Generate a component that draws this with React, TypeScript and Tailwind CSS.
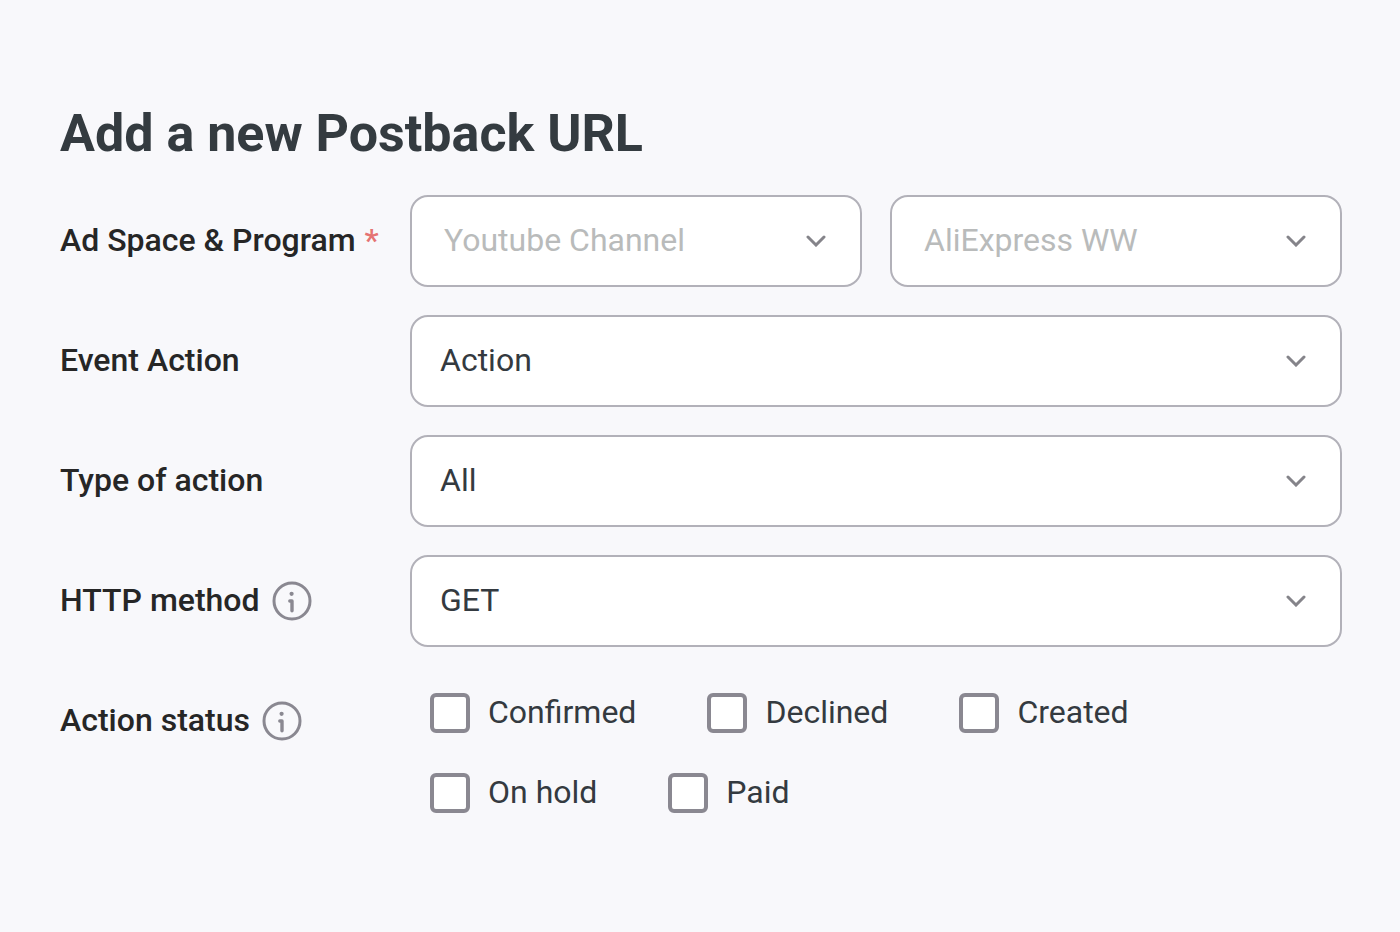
import { useId, useState } from "react";
import type { ReactNode } from "react";

function Chevron() {
  return (
    <svg
      className="pointer-events-none absolute top-1/2 right-[34px] h-3 w-6 -translate-y-1/2"
      viewBox="0 0 24 12"
      fill="none"
      stroke="#85848a"
      strokeWidth="3"
      strokeLinecap="round"
      strokeLinejoin="miter"
      aria-hidden="true"
    >
      <path d="M4 2l8 8 8-8" />
    </svg>
  );
}

function InfoIcon() {
  return (
    <svg
      className="size-10 shrink-0"
      viewBox="0 0 40 40"
      fill="none"
      stroke="#8a8891"
      strokeWidth="3"
      strokeLinecap="round"
      strokeLinejoin="round"
      aria-hidden="true"
    >
      <circle cx="20" cy="20" r="18" />
      <path d="M17.8 20h2.2V29.8" strokeWidth="3.4" />
      <circle cx="19.6" cy="12.8" r="2.1" fill="#8a8891" stroke="none" />
    </svg>
  );
}

type SelectProps = {
  id: string;
  options: string[];
  muted?: boolean;
  label?: string;
};

function Select({ id, options, muted, label }: SelectProps) {
  return (
    <div className="relative min-w-0 flex-1">
      <select
        id={id}
        aria-label={label}
        className={
          muted
            ? "block h-23 w-full appearance-none rounded-[18px] border-2 border-[#b2b1b9] bg-white pr-16 pb-0.5 pl-8 text-[32px] text-[#b9bbbb]"
            : "block h-23 w-full appearance-none rounded-[18px] border-2 border-[#b2b1b9] bg-white pr-16 pb-0.5 pl-7 text-[32px] text-[#343a40]"
        }
      >
        {options.map((option) => (
          <option key={option}>{option}</option>
        ))}
      </select>
      <Chevron />
    </div>
  );
}

function Row({ label, htmlFor, extra, children }: { label: string; htmlFor: string; extra?: ReactNode; children: ReactNode }) {
  return (
    <div className="flex items-center">
      <div className="flex w-[350px] shrink-0 items-center">
        <label htmlFor={htmlFor} className="pb-0.5 text-[32px] leading-10 font-medium text-[#262626]">
          {label}
        </label>
        {extra}
      </div>
      <div className="flex min-w-0 flex-1 gap-7">{children}</div>
    </div>
  );
}

function Status({ label }: { label: string }) {
  const id = useId();
  const [checked, setChecked] = useState(false);
  return (
    <div className="flex items-center gap-[18px]">
      <input
        id={id}
        type="checkbox"
        checked={checked}
        onChange={(event) => setChecked(event.target.checked)}
        className="size-10 appearance-none rounded-[6px] border-4 border-[#8a8891] bg-white checked:bg-[#8a8891]"
      />
      <label htmlFor={id} className="pb-0.5 text-[32px] leading-[38px] text-[#343a40]">
        {label}
      </label>
    </div>
  );
}

export default function App() {
  return (
    <main className="min-h-screen bg-[#f8f8fb] pt-[102px] pr-[58px] pb-16 pl-[60px] font-[Roboto,sans-serif]">
      <h1 className="text-[52px] leading-16 font-bold text-[#343b40]">Add a new Postback URL</h1>
      <form className="mt-[29px] flex flex-col gap-7">
        <Row
          label="Ad Space &amp; Program"
          htmlFor="space"
          extra={<span className="ml-[9px] pb-0.5 text-[32px] leading-10 font-medium text-[#e57373]">*</span>}
        >
          <Select id="space" options={["Youtube Channel"]} muted />
          <Select id="program" options={["AliExpress WW"]} label="Program" muted />
        </Row>
        <Row label="Event Action" htmlFor="event">
          <Select id="event" options={["Action"]} />
        </Row>
        <Row label="Type of action" htmlFor="type">
          <Select id="type" options={["All"]} />
        </Row>
        <Row label="HTTP method" htmlFor="method" extra={<span className="ml-3"><InfoIcon /></span>}>
          <Select id="method" options={["GET", "POST"]} />
        </Row>
        <fieldset className="flex items-start pt-[18px]" aria-labelledby="status">
          <div className="flex h-14 w-[370px] shrink-0 items-center gap-3">
            <span id="status" className="pb-0.5 text-[32px] leading-10 font-medium text-[#262626]">
              Action status
            </span>
            <InfoIcon />
          </div>
          <div className="flex min-w-0 flex-1 flex-wrap gap-x-[71px] gap-y-10">
            <Status label="Confirmed" />
            <Status label="Declined" />
            <Status label="Created" />
            <Status label="On hold" />
            <Status label="Paid" />
          </div>
        </fieldset>
      </form>
    </main>
  );
}
